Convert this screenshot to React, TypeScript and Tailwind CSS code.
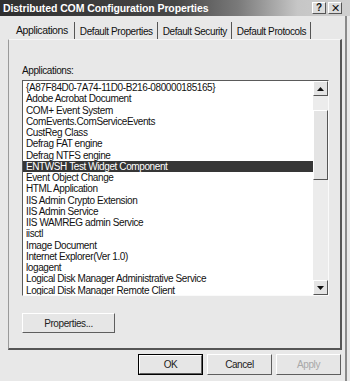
import type { ReactNode } from 'react';

const apps = [
  '{A87F84D0-7A74-11D0-B216-080000185165}',
  'Adobe Acrobat Document',
  'COM+ Event System',
  'ComEvents.ComServiceEvents',
  'CustReg Class',
  'Defrag FAT engine',
  'Defrag NTFS engine',
  'ENTWSH Test Widget Component',
  'Event Object Change',
  'HTML Application',
  'IIS Admin Crypto Extension',
  'IIS Admin Service',
  'IIS WAMREG admin Service',
  'iisctl',
  'Image Document',
  'Internet Explorer(Ver 1.0)',
  'logagent',
  'Logical Disk Manager Administrative Service',
  'Logical Disk Manager Remote Client',
];

const SELECTED = 7;

const tabs = ['Applications', 'Default Properties', 'Default Security', 'Default Protocols'];

function Button({ children, className = '', isDefault = false, disabled = false }: { children: ReactNode; className?: string; isDefault?: boolean; disabled?: boolean }) {
  return (
    <div className={`${className} ${isDefault ? 'border border-black' : ''}`}>
      <div className="h-full w-full border-t border-l border-white border-r border-b border-r-[#5e5e5e] border-b-[#5e5e5e] flex items-center justify-center bg-[#e6e6e6]">
        <span className={disabled ? 'text-[#a8a8a8]' : 'text-[#222]'}>{children}</span>
      </div>
    </div>
  );
}

function Arrow({ up }: { up?: boolean }) {
  return (
    <div className="h-[15px] w-full border-t border-l border-white border-r border-b border-r-[#555] border-b-[#555] bg-[#e4e4e4] flex items-center justify-center">
      <svg width="7" height="4" viewBox="0 0 7 4">
        {up ? <polygon points="3.5,0 7,4 0,4" fill="#111" /> : <polygon points="0,0 7,0 3.5,4" fill="#111" />}
      </svg>
    </div>
  );
}

export default function App() {
  return (
    <div className="w-[350px] h-[381px] bg-[#e8e8e8] overflow-hidden flex flex-col font-['Liberation_Sans',Arial,sans-serif] text-[10px] tracking-[-0.4px] text-[#111] relative">
      {/* Title bar */}
      <div className="h-[16px] shrink-0 flex items-center justify-between pl-[3px] pr-[8px] bg-[linear-gradient(to_right,#2f2f2f_0%,#474747_50%,#7a7a7a_68%,#c6c6c6_85%,#cfcfcf_100%)]">
        <span className="text-white font-bold text-[10.5px] leading-none tracking-[-0.1px]">Distributed COM Configuration Properties</span>
        <div className="flex gap-[2px] tracking-normal">
          <div className="w-[14px] h-[12px] bg-[#dcdcdc] border border-t-white border-l-white border-r-[#555] border-b-[#555] flex items-center justify-center text-[10px] font-bold leading-none">?</div>
          <div className="w-[14px] h-[12px] bg-[#dcdcdc] border border-t-white border-l-white border-r-[#555] border-b-[#555] flex items-center justify-center text-[11px] leading-none">✕</div>
        </div>
      </div>

      {/* Tabs */}
      <div className="mt-[6px] h-[18px] shrink-0 flex items-end pl-[12px]">
        {tabs.map((t, i) => (
          <div
            key={t}
            className={`h-full flex items-center border-r border-r-[#555] ${i === 0 ? 'pl-[4px] pr-[6px] text-[10.5px]' : 'pl-[5px] pr-[4px]'} `}
          >
            {t}
          </div>
        ))}
      </div>

      {/* Panel */}
      <div className="mx-[8px] mt-[-1px] h-[311px] shrink-0 border-t border-l border-t-[#f6f6f6] border-l-[#9a9a9a] border-r-2 border-b-2 border-r-[#555] border-b-[#555] pt-[26px] pl-[13px] pr-[11px] flex flex-col">
        <div className="leading-none h-[14px]">Applications:</div>
        <div className="h-[216px] border-t border-l border-t-[#5a5a5a] border-l-[#5a5a5a] border-r border-b border-r-[#fafafa] border-b-[#fafafa] bg-white flex">
          <div className="flex-1 pt-[1px] overflow-hidden">
            {apps.map((a, i) => (
              <div
                key={a}
                className={`h-[11.25px] leading-[11.25px] pl-[3px] whitespace-nowrap ${i === SELECTED ? 'bg-[#363636] text-white' : ''}`}
              >
                {a}
              </div>
            ))}
          </div>
          <div className="w-[15px] flex flex-col bg-[#ececec]">
            <Arrow up />
            <div className="mt-[14px] h-[70px] border-t border-l border-white border-r border-b border-r-[#555] border-b-[#555] bg-[#e4e4e4]" />
            <div className="flex-1" />
            <Arrow />
          </div>
        </div>
        <Button className="mt-[17px] w-[93px] h-[20px]">Properties...</Button>
      </div>

      {/* Bottom buttons */}
      <div className="mt-[4px] flex gap-[4px] pl-[138px]">
        <Button isDefault className="w-[65px] h-[21px]">OK</Button>
        <Button className="w-[65px] h-[21px]">Cancel</Button>
        <Button disabled className="w-[65px] h-[21px]">Apply</Button>
      </div>

      {/* Right window border */}
      <div className="absolute right-[3px] top-[16px] bottom-0 w-[2px] bg-[#8a8a8a]" />
    </div>
  );
}
